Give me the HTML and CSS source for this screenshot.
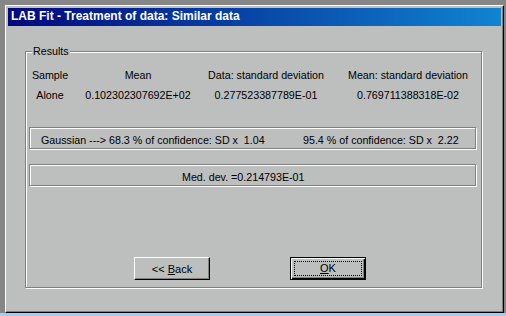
FILE: index.html
```html
<!DOCTYPE html>
<html lang="en">
<head>
  <meta charset="UTF-8">
  <title>LAB Fit - Treatment of data: Similar data</title>
  <link rel="stylesheet" href="styles.css">
</head>
<body>

<div class="window">
  <div class="titlebar">LAB Fit - Treatment of data: Similar data</div>

  <fieldset class="group">
    <legend>Results</legend>

    <div class="table">
      <div>Sample</div>
      <div>Mean</div>
      <div>Data: standard deviation</div>
      <div>Mean: standard deviation</div>
      <div>Alone</div>
      <div>0.102302307692E+02</div>
      <div>0.277523387789E-01</div>
      <div>0.769711388318E-02</div>
    </div>

    <div class="panel">
      <span class="conf">Gaussian ---&gt; 68.3 % of confidence: SD x  1.04</span>
      <span>95.4 % of confidence: SD x  2.22</span>
    </div>

    <div class="panel meddev">
      <span>Med. dev. =0.214793E-01</span>
    </div>

    <div class="buttons">
      <button class="btn">&lt;&lt; <u>B</u>ack</button>
      <button class="btn default"><span class="focus"><u>O</u>K</span></button>
    </div>
  </fieldset>
</div>
<div class="desk"></div>

</body>
</html>
```

FILE: styles.css
```css
html, body {
  margin: 0;
  width: 506px;
  height: 316px;
  overflow: hidden;
}
body {
  background: #868686;
  font-family: "Liberation Sans", Arial, sans-serif;
  font-size: 10.7px;
  color: #000;
}
.window {
  box-sizing: border-box;
  width: 499px;
  height: 308px;
  margin: 5px 0 0 5px;
  padding: 2px;
  background: #bdbebe;
  border: 1px solid;
  border-color: #fff #000 #000 #fff;
  box-shadow: inset -1px -1px 0 #808080;
}
.titlebar {
  height: 18px;
  line-height: 16px;
  padding-left: 3px;
  background: linear-gradient(to right, #000880, #1084d0);
  color: #fff;
  font-weight: bold;
  font-size: 12px;
}
.group {
  box-sizing: border-box;
  width: 457px;
  min-width: 0;
  height: 243px;
  margin: 19px 0 0 17px;
  padding: 0 0 7px;
  border: 1px solid #808080;
  box-shadow: inset 1px 1px 0 #fff, 1px 1px 0 #fff;
  display: flex;
  flex-direction: column;
}
.group legend {
  margin-left: 6px;
  padding: 0 1px;
  line-height: 13px;
  background: #bdbebe;
}
.table {
  display: grid;
  grid-template-columns: 48px 128px 128px 156px;
  justify-items: center;
  line-height: 20px;
  margin-top: 7px;
  white-space: nowrap;
}
.panel {
  box-sizing: border-box;
  display: flex;
  height: 22px;
  margin: 22px 0 0 3px;
  width: 447px;
  padding-left: 11px;
  line-height: 24px;
  border: 1px solid #808080;
  box-shadow: inset 1px 1px 0 #fff, 1px 1px 0 #fff;
  white-space: pre;
}
.conf {
  width: 262px;
}
.meddev {
  margin-top: 15px;
  padding-left: 152px;
}
.buttons {
  display: flex;
  gap: 80px;
  margin-top: auto;
  padding-left: 108px;
}
.btn {
  box-sizing: border-box;
  width: 76px;
  height: 23px;
  padding: 0;
  background: #bdbebe;
  border: 1px solid;
  border-color: #fff #000 #000 #fff;
  box-shadow: inset -1px -1px 0 #808080;
  font-family: "Liberation Sans", Arial, sans-serif;
  font-size: 11px;
  color: #000;
}
.btn.default {
  border: 1px solid #000;
  box-shadow: inset 1px 1px 0 #fff, inset -1px -1px 0 #000, inset -2px -2px 0 #808080;
  padding: 3px;
}
.focus {
  display: block;
  height: 100%;
  box-sizing: border-box;
  border: 1px dotted #000;
  line-height: 13px;
}
.desk {
  height: 3px;
  background: #a6caf0;
}
```
